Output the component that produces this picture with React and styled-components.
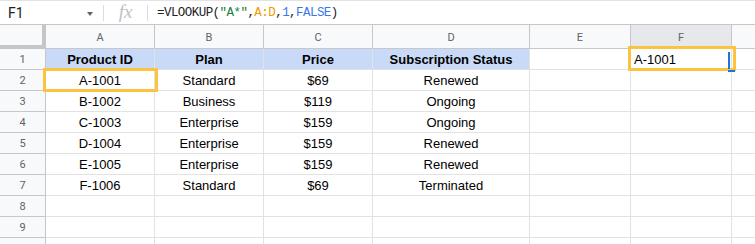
import React from "react";
import styled, { createGlobalStyle } from "styled-components";

const Global = createGlobalStyle`
  html, body { margin: 0; padding: 0; background: #fff; }
  body { font-family: "Liberation Sans", Arial, sans-serif; }
`;

const Page = styled.div`
  width: 755px;
  height: 244px;
  overflow: hidden;
  background: #fff;
  display: flex;
  flex-direction: column;
`;

const FormulaBar = styled.div`
  height: 25px;
  box-sizing: border-box;
  border-top: 1px solid #e3e3e3;
  border-bottom: 1px solid #c7c7c7;
  display: flex;
  align-items: center;
  flex-shrink: 0;
`;

const NameBox = styled.div`
  width: 103px;
  box-sizing: border-box;
  padding: 0 10px 0 8px;
  display: flex;
  align-items: center;
  justify-content: space-between;
  font-family: Roboto, "Liberation Sans", sans-serif;
  font-size: 14px;
  color: #202124;
`;

const Caret = styled.span`
  width: 0;
  height: 0;
  border-left: 3.5px solid transparent;
  border-right: 3.5px solid transparent;
  border-top: 4px solid #5f6368;
  margin-top: 2px;
`;

const Divider = styled.span`
  width: 1px;
  height: 16px;
  background: #dadce0;
  flex-shrink: 0;
`;

const FxLabel = styled.span`
  width: 43px;
  text-align: center;
  font-family: "Liberation Serif", "Times New Roman", serif;
  font-style: italic;
  font-size: 19px;
  color: #bdc1c6;
  line-height: 1;
  margin-top: -2px;
`;

const Formula = styled.div`
  padding-left: 9px;
  font-family: "Liberation Mono", "Courier New", monospace;
  font-size: 12.5px;
  letter-spacing: -0.55px;
  color: #202124;
  white-space: pre;
`;

const Tok = styled.span`
  color: ${(p) => p.$c || "#202124"};
`;

const Grid = styled.div`
  display: grid;
  grid-template-columns: 46px 109px 109px 109px 157px 101px 101px 101px;
  grid-template-rows: 24px repeat(10, 21px);
`;

const Corner = styled.div`
  box-sizing: border-box;
  background: #f8f9fa;
  border-right: 4px solid #c4c7c5;
  border-bottom: 4px solid #c4c7c5;
`;

const ColHead = styled.div`
  box-sizing: border-box;
  background: ${(p) => (p.$active ? "#e6e8eb" : "#f8f9fa")};
  border-right: 1px solid #c7c7c7;
  border-bottom: 1px solid #c7c7c7;
  display: flex;
  align-items: center;
  justify-content: center;
  font-family: Roboto, "Liberation Sans", sans-serif;
  font-size: 11px;
  color: #5f6368;
  padding-top: 1px;
`;

const RowHead = styled.div`
  box-sizing: border-box;
  background: #f8f9fa;
  border-right: 1px solid #c7c7c7;
  border-bottom: 1px solid #c7c7c7;
  display: flex;
  align-items: center;
  justify-content: center;
  font-family: Roboto, "Liberation Sans", sans-serif;
  font-size: 11px;
  color: #5f6368;
`;

const Cell = styled.div`
  position: relative;
  box-sizing: border-box;
  background: ${(p) => (p.$head ? "#c9daf8" : "#fff")};
  border-right: 1px solid #e2e2e2;
  border-bottom: 1px solid #e2e2e2;
  display: flex;
  align-items: center;
  justify-content: ${(p) => (p.$left ? "flex-start" : "center")};
  padding: 1px 3px 0;
  font-size: 13px;
  font-weight: ${(p) => (p.$head ? 700 : 400)};
  color: #000;
  white-space: nowrap;
`;

const Highlight = styled.div`
  position: absolute;
  z-index: 3;
  left: -3px;
  top: ${(p) => p.$top}px;
  right: ${(p) => p.$right}px;
  bottom: -2px;
  border: 3px solid #fbc440;
  pointer-events: none;
`;

const CursorLine = styled.div`
  position: absolute;
  z-index: 4;
  right: 1px;
  top: 3px;
  bottom: 0;
  width: 2px;
  background: #1a73e8;
`;

const CursorFoot = styled.div`
  position: absolute;
  z-index: 4;
  right: -4px;
  bottom: -3px;
  width: 7px;
  height: 2px;
  background: #1a73e8;
`;

const columns = ["A", "B", "C", "D", "E", "F", ""];

const header = ["Product ID", "Plan", "Price", "Subscription Status"];
const data = [
  ["A-1001", "Standard", "$69", "Renewed"],
  ["B-1002", "Business", "$119", "Ongoing"],
  ["C-1003", "Enterprise", "$159", "Ongoing"],
  ["D-1004", "Enterprise", "$159", "Renewed"],
  ["E-1005", "Enterprise", "$159", "Renewed"],
  ["F-1006", "Standard", "$69", "Terminated"],
];

export default function App() {
  const rows = [];
  for (let r = 1; r <= 10; r++) {
    rows.push(<RowHead key={`rh${r}`}>{r}</RowHead>);
    for (let c = 0; c < 7; c++) {
      const key = `c${r}-${c}`;
      if (r === 1 && c < 4) {
        rows.push(
          <Cell key={key} $head>
            {header[c]}
          </Cell>
        );
      } else if (r === 1 && c === 5) {
        rows.push(
          <Cell key={key} $left>
            A-1001
            <Highlight $top={-3} $right={-5} />
            <CursorLine />
            <CursorFoot />
          </Cell>
        );
      } else if (r >= 2 && r <= 7 && c < 4) {
        rows.push(
          <Cell key={key}>
            {data[r - 2][c]}
            {r === 2 && c === 0 && <Highlight $top={-2} $right={-4} />}
          </Cell>
        );
      } else {
        rows.push(<Cell key={key} />);
      }
    }
  }

  return (
    <Page>
      <Global />
      <FormulaBar>
        <NameBox>
          <span>F1</span>
          <Caret />
        </NameBox>
        <Divider />
        <FxLabel>fx</FxLabel>
        <Divider />
        <Formula>
          <Tok>=VLOOKUP(</Tok>
          <Tok $c="#188038">"A*"</Tok>
          <Tok>,</Tok>
          <Tok $c="#f29900">A:D</Tok>
          <Tok>,</Tok>
          <Tok $c="#3b78e7">1</Tok>
          <Tok>,</Tok>
          <Tok $c="#3b78e7">FALSE</Tok>
          <Tok>)</Tok>
        </Formula>
      </FormulaBar>
      <Grid>
        <Corner />
        {columns.map((c, i) => (
          <ColHead key={i} $active={c === "F"}>
            {c}
          </ColHead>
        ))}
        {rows}
      </Grid>
    </Page>
  );
}
